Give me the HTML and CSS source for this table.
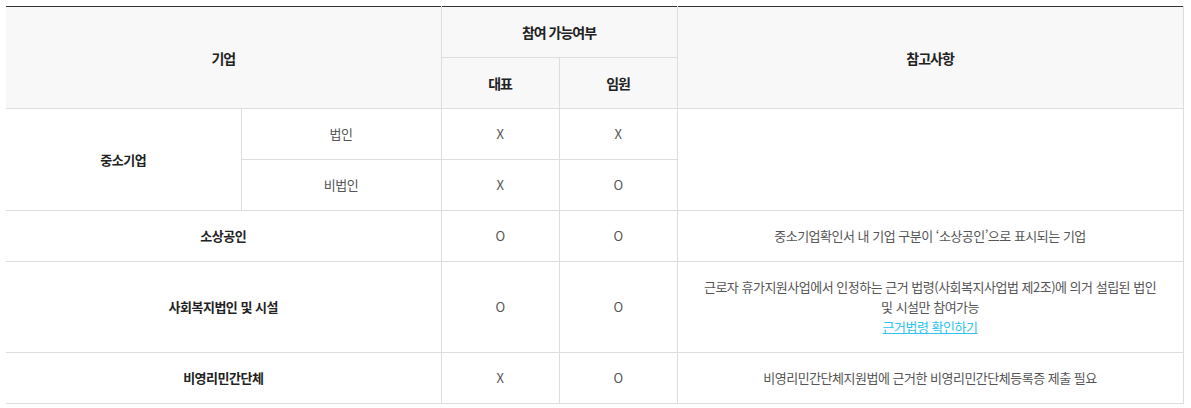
FILE: index.html
```html
<!DOCTYPE html>
<html lang="ko">
<head>
<meta charset="utf-8">
<title>참여 가능여부</title>
<link rel="stylesheet" href="styles.css">
</head>
<body>
<div class="wrap">
<table class="tbl">
  <colgroup>
    <col class="c1"><col class="c2"><col class="c3"><col class="c4"><col class="c5">
  </colgroup>
  <thead>
    <tr>
      <th colspan="2" rowspan="2">기업</th>
      <th colspan="2">참여 가능여부</th>
      <th rowspan="2">참고사항</th>
    </tr>
    <tr>
      <th>대표</th>
      <th>임원</th>
    </tr>
  </thead>
  <tbody>
    <tr>
      <td rowspan="2" class="label">중소기업</td>
      <td>법인</td>
      <td>X</td>
      <td>X</td>
      <td rowspan="2" class="note"></td>
    </tr>
    <tr>
      <td>비법인</td>
      <td>X</td>
      <td>O</td>
    </tr>
    <tr>
      <td colspan="2" class="label">소상공인</td>
      <td>O</td>
      <td>O</td>
      <td class="note">중소기업확인서 내 기업 구분이 ‘소상공인’으로 표시되는 기업</td>
    </tr>
    <tr>
      <td colspan="2" class="label">사회복지법인 및 시설</td>
      <td>O</td>
      <td>O</td>
      <td class="note">근로자 휴가지원사업에서 인정하는 근거 법령(사회복지사업법 제2조)에 의거 설립된 법인 및 시설만 참여가능<br><a href="#" class="link">근거법령 확인하기</a></td>
    </tr>
    <tr>
      <td colspan="2" class="label">비영리민간단체</td>
      <td>X</td>
      <td>O</td>
      <td class="note">비영리민간단체지원법에 근거한 비영리민간단체등록증 제출 필요</td>
    </tr>
  </tbody>
</table>
</div>
</body>
</html>
```

FILE: styles.css
```css
html, body {
  margin: 0;
  padding: 0;
  background: #fff;
}
.wrap {
  padding: 6px 0 0 6px;
}
.tbl {
  width: 1177px;
  table-layout: fixed;
  border-collapse: collapse;
  border-top: 1px solid #333;
  font-family: "Noto Sans CJK KR", "Noto Sans", sans-serif;
  font-size: 13px;
  letter-spacing: -0.5px;
  line-height: 20px;
  color: #555;
}
.c1 { width: 235px; }
.c2 { width: 200px; }
.c3 { width: 118px; }
.c4 { width: 118px; }
.c5 { width: 506px; }
.tbl th,
.tbl td {
  border-right: 1px solid #ddd;
  border-bottom: 1px solid #ddd;
  padding: 15px 10px;
  text-align: center;
  vertical-align: middle;
}
.tbl td.note {
  padding: 15px 22px;
}
.tbl th {
  background: #f8f8f8;
  color: #222;
  font-weight: 700;
  font-size: 14px;
  letter-spacing: -1px;
}
.tbl td.label {
  color: #222;
  font-weight: 700;
}
.link {
  color: #2ec2f0;
  text-decoration: underline;
}
```
